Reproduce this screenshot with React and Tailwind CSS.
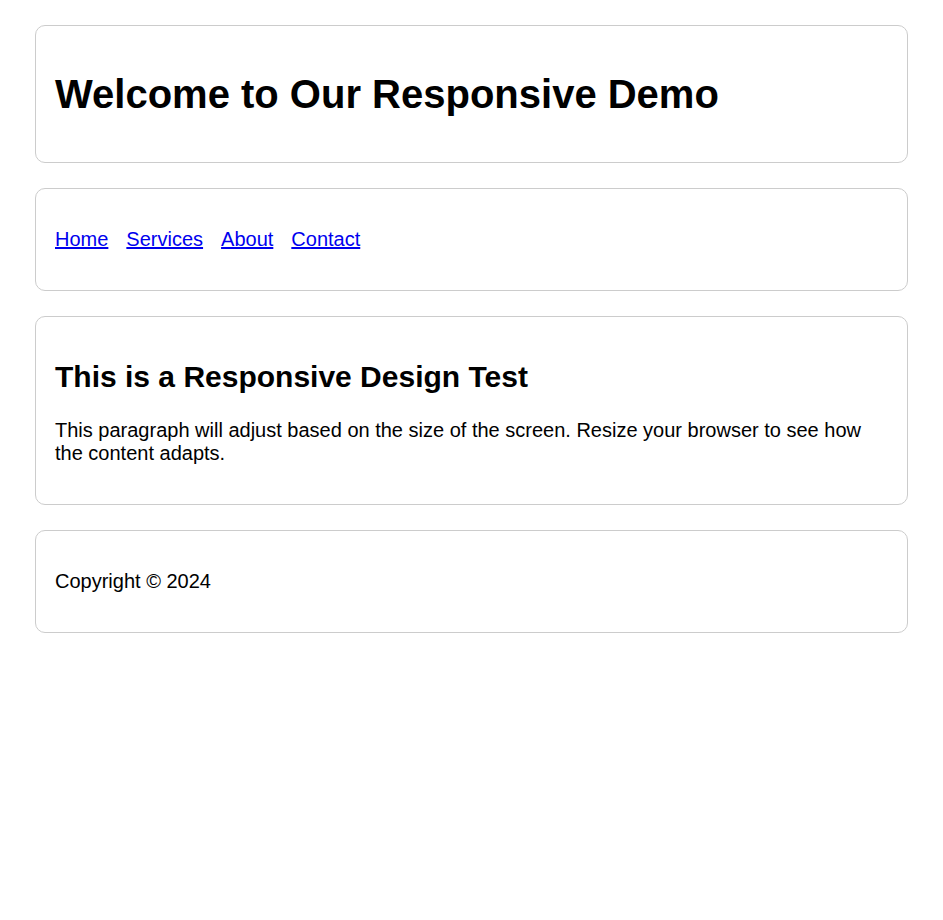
const card = "rounded-[10px] border border-[#ccc] px-[19px]";

const links = ["Home", "Services", "About", "Contact"];

export default function App() {
  return (
    <div className="flex flex-col gap-[25px] bg-white px-[35px] py-[25px] font-['Liberation_Sans',Arial,sans-serif] text-[20px] leading-[23px] text-black">
      <header className={`${card} py-[45px]`}>
        <h1 className="text-[40px] leading-[46px] font-bold">Welcome to Our Responsive Demo</h1>
      </header>
      <nav className={`${card} py-[39px]`}>
        <ul className="flex flex-wrap gap-[18px]">
          {links.map((label) => (
            <li key={label}>
              <a href="#" className="text-[#0000ee] underline">{label}</a>
            </li>
          ))}
        </ul>
      </nav>
      <main className={`${card} pt-[42px] pb-[39px]`}>
        <h2 className="mb-[25px] text-[30px] leading-[35px] font-bold">This is a Responsive Design Test</h2>
        <p>
          This paragraph will adjust based on the size of the screen. Resize your browser to see how the content adapts.
        </p>
      </main>
      <footer className={`${card} py-[39px]`}>
        <p>Copyright © 2024</p>
      </footer>
    </div>
  );
}
